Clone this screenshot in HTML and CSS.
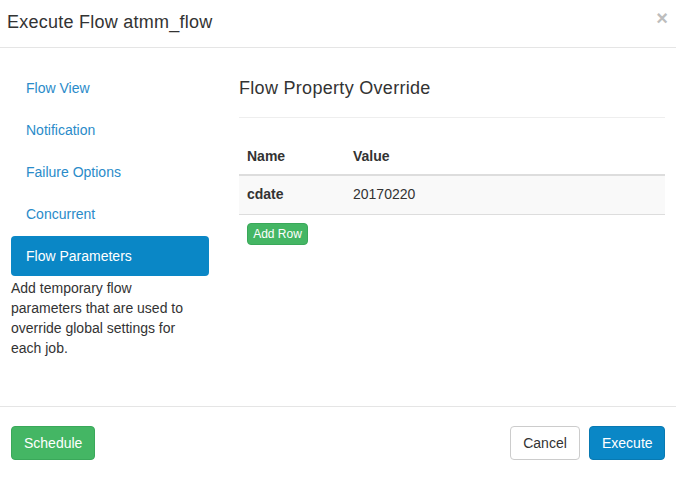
FILE: index.html
```html
<!DOCTYPE html>
<html>
<head>
<meta charset="utf-8">
<link rel="stylesheet" href="styles.css">
</head>
<body>
<div class="modal">
  <div class="modal-header">
    <h4 class="modal-title">Execute Flow atmm_flow</h4>
    <span class="close">&times;</span>
  </div>
  <div class="modal-body">
    <div class="side">
      <ul class="nav">
        <li><a>Flow View</a></li>
        <li><a>Notification</a></li>
        <li><a>Failure Options</a></li>
        <li><a>Concurrent</a></li>
        <li class="active"><a>Flow Parameters</a></li>
      </ul>
      <p class="help">Add temporary flow parameters that are used to override global settings for each job.</p>
    </div>
    <div class="main">
      <h3 class="section-title">Flow Property Override</h3>
      <table class="props">
        <thead>
          <tr><th class="col-name">Name</th><th>Value</th></tr>
        </thead>
        <tbody>
          <tr><td class="key">cdate</td><td>20170220</td></tr>
        </tbody>
      </table>
      <button class="btn btn-success btn-xs">Add Row</button>
    </div>
  </div>
  <div class="modal-footer">
    <button class="btn btn-success">Schedule</button>
    <div class="right">
      <button class="btn btn-default">Cancel</button>
      <button class="btn btn-primary">Execute</button>
    </div>
  </div>
</div>
</body>
</html>
```
FILE: styles.css
```css
* { box-sizing: border-box; }
html, body { margin: 0; padding: 0; background: #fff; }
body {
  font-family: "Helvetica Neue", "Liberation Sans", Arial, sans-serif;
  font-size: 14px;
  line-height: 20px;
  color: #333;
}
.modal { width: 676px; height: 477px; display: flex; flex-direction: column; }
.modal-header {
  height: 48px;
  border-bottom: 1px solid #e5e5e5;
  display: flex;
  align-items: center;
  justify-content: space-between;
  padding: 0 7px 4px 7px;
}
.modal-title { margin: 0; font-size: 18px; font-weight: normal; color: #333; letter-spacing: 0.25px; }
.close { color: #bdbdbd; font-size: 20px; font-weight: bold; line-height: 20px; margin-bottom: 8px; margin-right: 1px; }
.modal-body {
  flex: 1;
  display: flex;
  gap: 30px;
  padding: 20px 11px 0 11px;
}
.side { width: 198px; flex-shrink: 0; }
.nav { list-style: none; margin: 0; padding: 0; display: flex; flex-direction: column; gap: 2px; }
.nav li a {
  display: block;
  height: 40px;
  line-height: 40px;
  padding: 0 15px;
  color: #2a8bc9;
  border-radius: 4px;
}
.nav li.active a { background: #0a87c6; color: #fff; }
.help { margin: 2px 0 0 0; line-height: 20px; color: #333; max-width: 185px; }
.main { flex: 1; }
.section-title {
  margin: 0;
  font-size: 18px;
  font-weight: 500;
  line-height: 20px;
  letter-spacing: 0.3px;
  padding: 10px 0 19px 0;
  border-bottom: 1px solid #eeeeee;
}
.props { width: 100%; border-collapse: collapse; margin-top: 19px; }
.props th {
  text-align: left;
  font-weight: bold;
  padding: 9px 8px 8px 8px;
  border-bottom: 2px solid #dddddd;
  line-height: 20px;
}
.props th.col-name { width: 106px; }
.props td {
  padding: 8px 8px 10px 8px;
  line-height: 20px;
  background: #f9f9f9;
  border-bottom: 1px solid #dddddd;
}
.props td.key { font-weight: bold; }
.btn {
  font-family: inherit;
  font-size: 14px;
  line-height: 20px;
  border-radius: 4px;
  border: 1px solid transparent;
  padding: 6px 12px;
  cursor: pointer;
  height: 34px;
}
.btn-xs { font-size: 12px; line-height: 16px; padding: 2px 5px; height: 22px; width: 61px; margin: 8px 0 0 8px; }
.btn-success { background: #44b664; border-color: #3aa85a; color: #fff; }
.btn-primary { background: #0a87c6; border-color: #0879b2; color: #fff; }
.btn-default { background: #fff; border-color: #cccccc; color: #333; }
.modal-footer {
  height: 71px;
  border-top: 1px solid #e5e5e5;
  display: flex;
  align-items: flex-start;
  justify-content: space-between;
  padding: 19px 11px 0 11px;
}
.modal-footer .btn { padding: 6px 12px; }
.modal-footer .btn-success { width: 84px; }
.right { display: flex; gap: 9px; }
.right .btn-default { width: 70px; }
.right .btn-primary { width: 76px; }
```
